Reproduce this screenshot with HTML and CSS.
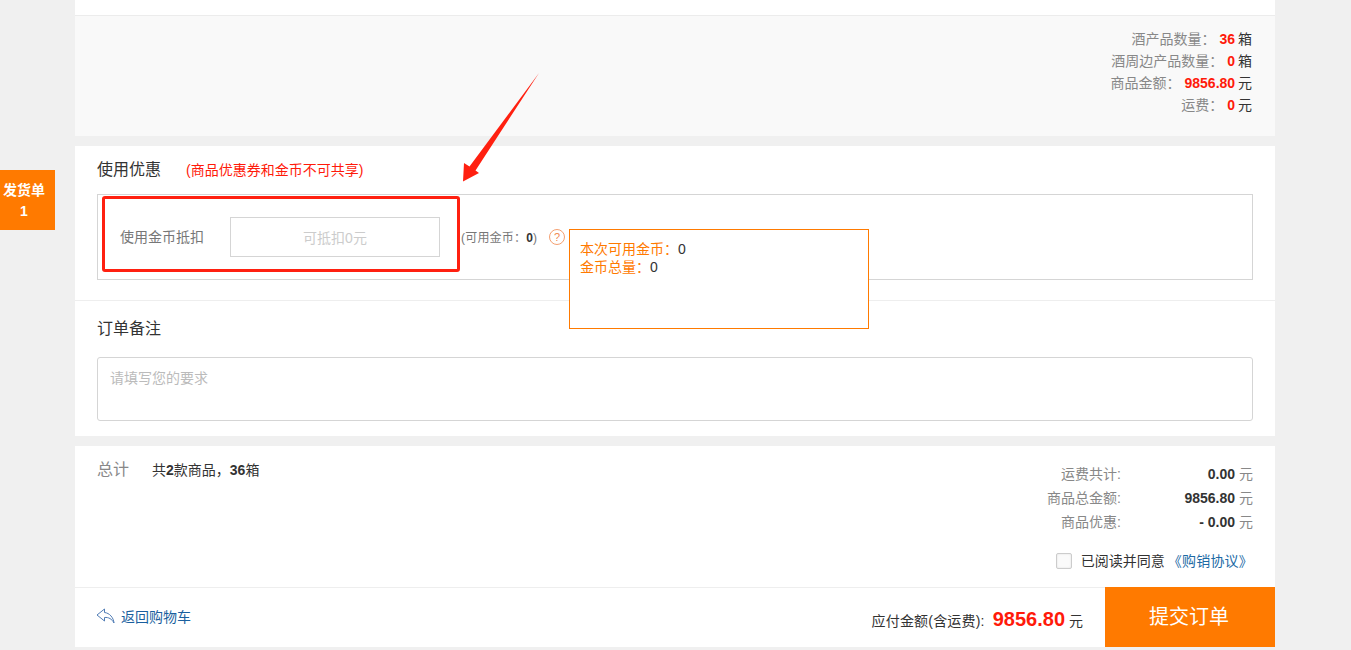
FILE: index.html
```html
<!DOCTYPE html>
<html lang="zh-CN">
<head>
<meta charset="utf-8">
<title>确认订单</title>
<link rel="stylesheet" href="styles.css">
</head>
<body>
<div class="side-tab"><span>发货单</span><span>1</span></div>
<main class="page">
  <div class="strip"></div>
  <section class="summary">
    <p class="sum-line">酒产品数量：<b class="red">36</b> <span class="unit">箱</span></p>
    <p class="sum-line">酒周边产品数量：<b class="red">0</b> <span class="unit">箱</span></p>
    <p class="sum-line">商品金额：<b class="red">9856.80</b> <span class="unit">元</span></p>
    <p class="sum-line">运费：<b class="red">0</b> <span class="unit">元</span></p>
  </section>
  <section class="card">
    <div class="discount">
      <h2 class="heading">使用优惠<span class="warn">(商品优惠券和金币不可共享)</span></h2>
      <div class="coin-box">
        <span class="coin-label">使用金币抵扣</span>
        <div class="coin-input">可抵扣0元</div>
        <span class="coin-avail">(可用金币：<b>0</b>)</span>
        <span class="help">?</span>
        <div class="tooltip">
          <p>本次可用金币：<span class="dark">0</span></p>
          <p>金币总量：<span class="dark">0</span></p>
        </div>
        <div class="mark"></div>
      </div>
    </div>
    <div class="note">
      <h2 class="heading">订单备注</h2>
      <div class="note-input">请填写您的要求</div>
    </div>
  </section>
  <section class="card total">
    <div class="total-body">
      <div class="total-left">
        <span class="total-title">总计</span>
        <span class="total-count">共<b>2</b>款商品，<b>36</b>箱</span>
      </div>
      <div class="total-right">
        <div class="row"><span class="row-label">运费共计:</span><b class="row-val">0.00</b><span class="row-unit">元</span></div>
        <div class="row"><span class="row-label">商品总金额:</span><b class="row-val">9856.80</b><span class="row-unit">元</span></div>
        <div class="row"><span class="row-label">商品优惠:</span><b class="row-val">- 0.00</b><span class="row-unit">元</span></div>
        <div class="agree"><span class="check"></span><span>已阅读并同意</span><a class="link agree-link">《购销协议》</a></div>
      </div>
    </div>
    <div class="foot">
      <a class="back">
        <svg class="back-icon" width="19" height="16" viewBox="0 0 19 16"><path d="M8.5 1 L1 7 L8.5 13 V9.5 C12.5 9 16 11 18 15 C17.5 9.5 13.5 5 8.5 4.5 Z"/></svg>
        <span>返回购物车</span>
      </a>
      <div class="pay">
        <span class="pay-label">应付金额(含运费):</span><b class="pay-num">9856.80</b><span>元</span>
      </div>
      <button class="submit">提交订单</button>
    </div>
  </section>
  <svg class="arrow" width="80" height="112" viewBox="460 72 80 112"><polygon points="539,73 469.500,166.500 464,163 463,181.500 479,173 475.500,170.500"/></svg>
</main>
</body>
</html>
```
FILE: styles.css
```css
* { box-sizing: border-box; }
html, body { margin: 0; padding: 0; height: 650px; overflow: hidden; }
body {
  background: #f0f0f0;
  color: #333;
  font: 14px/22px "Liberation Sans", "Noto Sans CJK SC", sans-serif;
  position: relative;
}
p, h2 { margin: 0; font-weight: normal; }
.page { position: relative; width: 1200px; margin-left: 75px; }

.side-tab {
  position: absolute; left: 0; top: 170px; width: 55px; height: 60px;
  background: #ff7a00; color: #fff; font-size: 14px; font-weight: bold;
  display: flex; flex-direction: column; align-items: center; justify-content: center;
  line-height: 21px; padding: 1px 7px 0 0;
}

.strip { height: 16px; background: #fff; border-bottom: 1px solid #ececec; }
.summary { height: 120px; background: #f9f9f9; padding: 12px 23px 0 22px; margin-bottom: 10px; text-align: right; color: #888; }
.sum-line { height: 22px; word-spacing: -1px; }
.red { color: #ff1a0a; margin-left: 4px; }
.unit { color: #333; }

.card { background: #fff; margin-bottom: 10px; }
.discount { padding: 12px 22px 20px; border-bottom: 1px solid #eee; }
.heading { font-size: 16px; line-height: 24px; color: #333; }
.warn { font-size: 14px; color: #ff1a0a; margin-left: 25px; }
.coin-box {
  position: relative; margin-top: 12px; height: 86px; border: 1px solid #d5d5d5;
  display: flex; align-items: center; padding-left: 22px;
}
.coin-label { width: 110px; color: #777; }
.coin-input {
  width: 210px; height: 40px; border: 1px solid #d5d5d5; color: #ccc;
  text-align: center; line-height: 40px;
}
.coin-avail { margin-left: 21px; font-size: 12px; letter-spacing: 0.2px; color: #777; width: 88px; padding-top: 2px; }
.coin-avail b { color: #333; }
.help {
  width: 16px; height: 16px; border: 1px solid #f4a071; border-radius: 50%;
  color: #f08a50; font-size: 11px; line-height: 14px; text-align: center;
}
.tooltip {
  position: absolute; left: 471px; top: 34px; width: 300px; height: 100px;
  background: #fff; border: 1px solid #ff7a00; padding: 10px; color: #ff7a00;
  line-height: 18px; z-index: 2;
}
.dark { color: #333; }
.mark {
  position: absolute; left: 4px; top: 1px; width: 358px; height: 76px;
  border: 3px solid #ff2010; border-radius: 3px;
}

.note { padding: 16px 22px 15px; }
.note-input {
  margin-top: 16px; height: 64px; border: 1px solid #d5d5d5; border-radius: 3px;
  padding: 9px 12px; color: #bbb;
}

.total { height: 201px; margin-bottom: 0; }
.total-body { height: 141px; display: flex; justify-content: space-between; padding: 12px 22px 0; }
.total-left { display: flex; align-items: flex-start; }
.total-title { font-size: 16px; line-height: 24px; color: #888; width: 55px; }
.total-count { line-height: 24px; color: #333; }
.total-right { padding-top: 4px; }
.row { display: flex; height: 24px; line-height: 24px; }
.row-label { width: 130px; padding-right: 2px; text-align: right; color: #888; }
.row-val { width: 112px; text-align: right; color: #333; }
.row-unit { margin-left: 4px; width: 14px; color: #888; }
.agree { display: flex; align-items: center; justify-content: flex-end; height: 24px; margin-top: 15px; color: #333; }
.check {
  width: 16px; height: 16px; border: 1px solid #ccc; border-radius: 2px;
  background: #fafafa; box-shadow: inset 0 0 2px #ddd; margin-right: 9px;
}
.link { color: #1c6aa5; }
.agree-link { margin-left: 3px; letter-spacing: 0.2px; }

.foot { height: 60px; border-top: 1px solid #eee; display: flex; align-items: center; padding-left: 22px; }
.back { display: flex; align-items: center; color: #1a5f9e; margin-top: -1px; }
.back-icon { margin: -2px 6px 0 -1px; }
.back-icon path { fill: none; stroke: #4f7cb5; stroke-width: 1; }
.pay { margin-left: auto; margin-right: 22px; display: flex; align-items: baseline; color: #333; padding-top: 4px; }
.pay-label { letter-spacing: 0.2px; }
.pay-num { font-size: 20px; color: #ff1a0a; margin: 0 4px 0 8px; }
.submit {
  width: 170px; height: 60px; margin-top: -1px; border: 0; padding: 0 2px 0 0; background: #ff7a00; color: #fff;
  font: 20px/60px "Liberation Sans", "Noto Sans CJK SC", sans-serif;
}

.arrow { position: absolute; left: 385px; top: 72px; z-index: 3; }
.arrow polygon { fill: #ff2010; }
```
